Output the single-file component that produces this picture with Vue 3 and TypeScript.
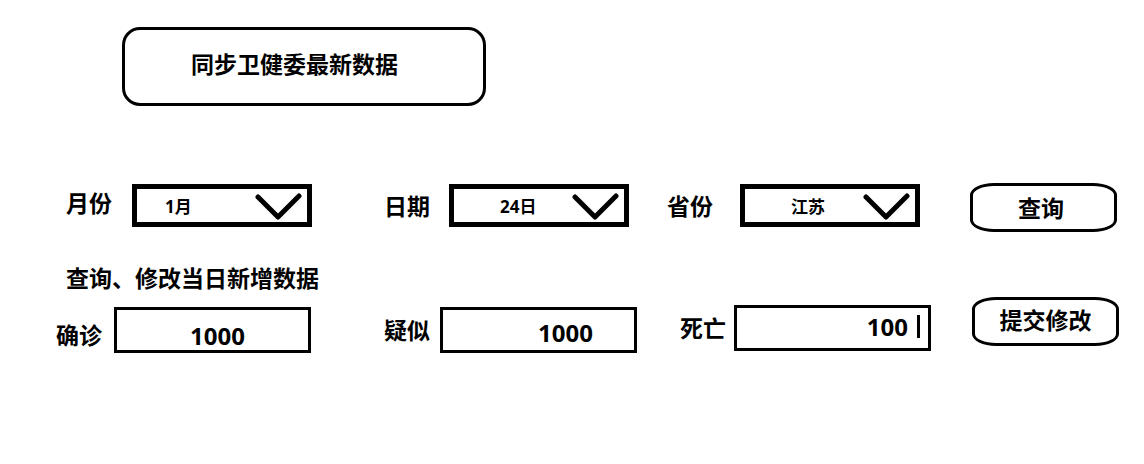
<script setup lang="ts">
import { ref } from 'vue'

interface SelectField {
  id: string
  label: string
  value: string
  options: string[]
}

interface CountField {
  id: string
  label: string
  value: string
}

const filters = ref<SelectField[]>([
  { id: 'month', label: '月份', value: '1月', options: ['1月', '2月', '3月'] },
  { id: 'day', label: '日期', value: '24日', options: ['23日', '24日', '25日'] },
  { id: 'province', label: '省份', value: '江苏', options: ['江苏', '浙江', '湖北'] },
])

const counts = ref<CountField[]>([
  { id: 'confirmed', label: '确诊', value: '1000' },
  { id: 'suspected', label: '疑似', value: '1000' },
  { id: 'deaths', label: '死亡', value: '100' },
])
</script>

<template>
  <main class="page">
    <button type="button" class="sync">同步卫健委最新数据</button>

    <form class="row" @submit.prevent>
      <div v-for="f in filters" :key="f.id" class="cell filter" :class="f.id">
        <label :for="f.id">{{ f.label }}</label>
        <div class="field">
          <select :id="f.id" v-model="f.value">
            <option v-for="o in f.options" :key="o" :value="o">{{ o }}</option>
          </select>
          <svg class="chevron" width="48" height="28" viewBox="0 0 48 28" aria-hidden="true">
            <path d="M4 5 L24 25 L45 4" />
          </svg>
        </div>
      </div>
      <button type="submit" class="action">查询</button>
    </form>

    <h2>查询、修改当日新增数据</h2>

    <form class="row" @submit.prevent>
      <div v-for="c in counts" :key="c.id" class="cell count" :class="c.id">
        <label :for="c.id">{{ c.label }}</label>
        <div class="field">
          <input :id="c.id" v-model="c.value" type="text" inputmode="numeric" />
          <span v-if="c.id === 'deaths'" class="caret"></span>
        </div>
      </div>
      <button type="submit" class="action submit">提交修改</button>
    </form>
  </main>
</template>

<style>
body {
  margin: 0;
  background: #fff;
}
</style>

<style scoped>
.page {
  box-sizing: border-box;
  padding: 27px 25px 24px 56px;
  color: #000;
  font: bold 23px/32px "Noto Sans", "Noto Sans CJK SC", sans-serif;
}

button,
select,
input {
  box-sizing: border-box;
  margin: 0;
  border: 3px solid #000;
  border-radius: 0;
  background: #fff;
  color: inherit;
  font: inherit;
}

.sync {
  display: block;
  width: 34.25%;
  min-width: 300px;
  height: 79px;
  margin-left: 66px;
  padding: 0 0 6px 66px;
  border-radius: 18px;
  text-align: left;
}

.row {
  display: grid;
  grid-template-columns: 328fr 283fr 303fr 149fr;
  align-items: start;
}

.sync + .row {
  margin-top: 77px;
}

h2 {
  margin: 30px 0 3px 10px;
  font: inherit;
}

.cell {
  display: flex;
  align-items: center;
}

label {
  flex: none;
  white-space: nowrap;
}

.field {
  position: relative;
  flex: 1;
  min-width: 0;
}

.filter {
  padding-top: 1px;
}

.filter label {
  width: 65px;
}

.month {
  padding-left: 10px;
  padding-right: 72px;
}

.filter.month label {
  width: 66px;
  padding-bottom: 6px;
}

.day {
  padding-right: 38px;
}

.province {
  padding-right: 50px;
}

.filter.province label {
  width: 73px;
}

select {
  display: block;
  width: 100%;
  height: 43px;
  padding: 2px 56px 0 46px;
  border-width: 5px;
  appearance: none;
  font-size: 17px;
}

.month select {
  padding-left: 28px;
}

.chevron {
  position: absolute;
  top: 8px;
  right: 10px;
  fill: none;
  stroke: #000;
  stroke-width: 5px;
  stroke-linecap: round;
  stroke-linejoin: round;
  pointer-events: none;
}

.count {
  padding-top: 10px;
}

.confirmed {
  align-items: flex-end;
  padding-right: 73px;
}

.confirmed label {
  width: 58px;
  line-height: 36px;
}

.suspected {
  padding-right: 30px;
}

.suspected label {
  width: 56px;
}

.count.deaths {
  padding-top: 8px;
  padding-left: 13px;
  padding-right: 39px;
}

.deaths label {
  width: 54px;
}

input {
  display: block;
  width: 100%;
  height: 46px;
  padding: 10px 63px 0 0;
  font-size: 24px;
  text-align: right;
}

.suspected input {
  padding-top: 4px;
  padding-right: 41px;
}

.deaths input {
  padding: 0 20px 4px 0;
}

.caret {
  position: absolute;
  top: 10px;
  right: 11px;
  width: 3px;
  height: 23px;
  background: #000;
}

.action {
  height: 49px;
  margin-right: 2px;
  padding: 0 5px 0 0;
  border-radius: 24px / 12px;
  white-space: nowrap;
}

.submit {
  margin-right: 0;
  margin-left: 2px;
  padding: 0 0 4px;
}
</style>
